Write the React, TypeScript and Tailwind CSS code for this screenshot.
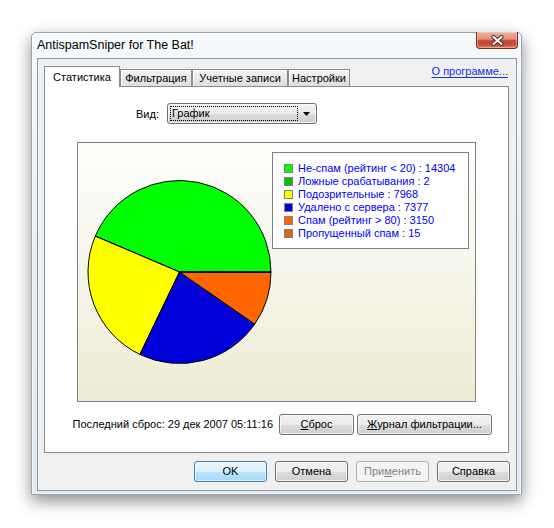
import React from "react";

const cx = 101.5;
const cy = 129;
const r = 91.5;

type Item = { label: string; value: number; fill: string; box: string };

const data: Item[] = [
  { label: "Не-спам (рейтинг < 20) : 14304", value: 14304, fill: "#00ff00", box: "bg-[#00ff00]" },
  { label: "Ложные срабатывания : 2", value: 2, fill: "#00c000", box: "bg-[#00c000]" },
  { label: "Подозрительные : 7968", value: 7968, fill: "#ffff00", box: "bg-[#ffff00]" },
  { label: "Удалено с сервера : 7377", value: 7377, fill: "#0000d8", box: "bg-[#0000d8]" },
  { label: "Спам (рейтинг > 80) : 3150", value: 3150, fill: "#ff6600", box: "bg-[#ff6600]" },
  { label: "Пропущенный спам : 15", value: 15, fill: "#d96a10", box: "bg-[#d96a10]" },
];

function pt(deg: number): [number, number] {
  const a = (deg * Math.PI) / 180;
  return [cx + r * Math.cos(a), cy - r * Math.sin(a)];
}

function Pie() {
  const total = data.reduce((s, d) => s + d.value, 0);
  let acc = 0;
  const paths = data.map((d, i) => {
    const a0 = (acc / total) * 360;
    acc += d.value;
    const a1 = (acc / total) * 360;
    const [x0, y0] = pt(a0);
    const [x1, y1] = pt(a1);
    const large = a1 - a0 > 180 ? 1 : 0;
    const dPath = `M ${cx} ${cy} L ${x0.toFixed(2)} ${y0.toFixed(2)} A ${r} ${r} 0 ${large} 0 ${x1.toFixed(2)} ${y1.toFixed(2)} Z`;
    return <path key={i} d={dPath} fill={d.fill} stroke="#000" strokeWidth={1} strokeLinejoin="round" />;
  });
  return (
    <svg width={194} height={258} viewBox="0 0 194 258" className="block shrink-0">
      {paths}
    </svg>
  );
}

function Btn({
  w,
  kind = "normal",
  children,
}: {
  w: string;
  kind?: "normal" | "default" | "disabled";
  children: React.ReactNode;
}) {
  const look =
    kind === "default"
      ? "border-[#3c7fb1] bg-[linear-gradient(180deg,#eaf6fd_0%,#d9f0fc_50%,#bee6fd_50%,#a7d9f5_100%)] shadow-[inset_0_0_0_1px_rgba(255,255,255,0.55)] text-black"
      : kind === "disabled"
      ? "border-[#adb2b5] bg-[#f4f4f4] text-[#838383]"
      : "border-[#707070] bg-[linear-gradient(180deg,#f2f2f2_0%,#ebebeb_50%,#dddddd_50%,#cfcfcf_100%)] shadow-[inset_0_0_0_1px_rgba(255,255,255,0.7)] text-black";
  return (
    <div className={`${w} h-[21px] shrink-0 flex items-center justify-center rounded-[3px] border ${look} text-[11px] leading-[13px] font-normal`}>
      {children}
    </div>
  );
}

function CloseButton() {
  return (
    <div className="-mt-px mr-[3px] w-[42px] h-[17px] rounded-b-[4px] border border-t-0 border-[#6e2e22] bg-[linear-gradient(180deg,#ebb3a5_0%,#df917f_45%,#c8503a_52%,#c2492f_75%,#d9846a_100%)] shadow-[inset_0_0_0_1px_rgba(255,220,210,0.45)] flex items-center justify-center">
      <svg width={13} height={11} viewBox="0 0 13 11" className="block">
        <path d="M2.5 2 L10.5 9 M10.5 2 L2.5 9" stroke="#3d1f1a" strokeWidth={4} strokeLinecap="round" />
        <path d="M2.5 2 L10.5 9 M10.5 2 L2.5 9" stroke="#ffffff" strokeWidth={2.2} strokeLinecap="round" />
      </svg>
    </div>
  );
}

export default function App() {
  return (
    <div className="w-[554px] h-[528px] bg-white pt-[32px] pl-[31px] overflow-hidden font-['Liberation_Sans',Arial,sans-serif] text-[11px] leading-[13px] text-black">
      {/* window frame */}
      <div className="w-[491px] h-[463px] border border-[#97a3ae] rounded-t-[5px] bg-[linear-gradient(180deg,#f6f9fb_0%,#ebf0f3_35%,#e3e9ee_100%)] shadow-[inset_0_0_0_1px_rgba(255,255,255,0.6),0_6px_16px_rgba(0,0,0,0.45)] flex flex-col">
        {/* title bar */}
        <div className="h-[25px] shrink-0 flex items-start justify-between">
          <div className="pl-[5px] pt-[5px] text-[12.5px] leading-[14px] text-black">AntispamSniper for The Bat!</div>
          <CloseButton />
        </div>

        {/* client area */}
        <div className="ml-[5px] w-[480px] h-[433px] shrink-0 border border-[#8c98a3] bg-[#f0f0f0] pt-[7px] pl-[6px] pr-[6px] flex flex-col">
          {/* tab row */}
          <div className="w-[465px] h-[20px] flex items-end shrink-0">
            <div className="relative z-10 -mb-px w-[76px] h-[21px] border border-b-0 border-[#898c95] bg-white pt-[4px] text-center">
              Статистика
            </div>
            <div className="w-[72px] h-[17px] border border-b-0 border-[#898c95] bg-[linear-gradient(180deg,#f4f4f4_0%,#e9e9e9_50%,#dedede_100%)] shadow-[inset_1px_1px_0_rgba(255,255,255,0.8)] pt-[2px] text-center">
              Фильтрация
            </div>
            <div className="w-[96px] h-[17px] border border-b-0 border-[#898c95] bg-[linear-gradient(180deg,#f4f4f4_0%,#e9e9e9_50%,#dedede_100%)] shadow-[inset_1px_1px_0_rgba(255,255,255,0.8)] pt-[2px] text-center">
              Учетные записи
            </div>
            <div className="w-[62px] h-[17px] border border-b-0 border-[#898c95] bg-[linear-gradient(180deg,#f4f4f4_0%,#e9e9e9_50%,#dedede_100%)] shadow-[inset_1px_1px_0_rgba(255,255,255,0.8)] pt-[2px] text-center">
              Настройки
            </div>
            <div className="ml-auto self-start -mt-px pr-px text-[#1432e6] underline underline-offset-[2px]">
              О программе...
            </div>
          </div>

          {/* tab panel */}
          <div className="w-[465px] h-[367px] shrink-0 border border-[#898c95] bg-white pt-[16px] flex flex-col">
            {/* view selector */}
            <div className="h-[21px] flex items-center pl-[91px] shrink-0">
              <div className="w-[31px] pt-px">Вид:</div>
              <div className="w-[150px] h-[21px] rounded-[3px] border border-[#707070] bg-[linear-gradient(180deg,#f2f2f2_0%,#ebebeb_50%,#dddddd_50%,#cfcfcf_100%)] shadow-[inset_0_0_0_1px_rgba(255,255,255,0.7)] flex items-center">
                <div className="ml-[2px] w-[128px] h-[15px] border border-dotted border-black pl-px flex items-center">
                  График
                </div>
                <svg width={7} height={4} viewBox="0 0 7 4" className="block ml-[5px]">
                  <polygon points="0,0 7,0 3.5,4" fill="#000" />
                </svg>
              </div>
            </div>

            {/* chart */}
            <div className="mt-[18px] ml-[32px] w-[399px] h-[260px] shrink-0 border border-[#808080] bg-[linear-gradient(180deg,#fefefc_0%,#f6f5ea_50%,#eeecd3_100%)] flex items-start">
              <Pie />
              <div className="mt-[9px] w-[197px] h-[97px] border border-[#808080] bg-white pt-[9px] pl-[11px]">
                {data.map((d) => (
                  <div key={d.label} className="h-[13px] flex items-center">
                    <div className={`w-[9px] h-[9px] shrink-0 border border-[#808080] ${d.box}`} />
                    <div className="ml-[5px] text-[#0000ff] whitespace-nowrap">{d.label}</div>
                  </div>
                ))}
              </div>
            </div>

            {/* reset row */}
            <div className="mt-[12px] h-[21px] flex items-center justify-end pr-[16px] shrink-0">
              <div className="whitespace-nowrap">Последний сброс: 29 дек 2007 05:11:16</div>
              <div className="ml-[6px]">
                <Btn w="w-[75px]">
                  <span className="underline underline-offset-[1px]">С</span>брос
                </Btn>
              </div>
              <div className="ml-[3px]">
                <Btn w="w-[135px]">
                  <span className="underline underline-offset-[1px]">Ж</span>урнал фильтрации...
                </Btn>
              </div>
            </div>
          </div>

          {/* dialog buttons */}
          <div className="mt-[8px] flex justify-end gap-[8px] shrink-0">
            <Btn w="w-[73px]" kind="default">OK</Btn>
            <Btn w="w-[73px]">Отмена</Btn>
            <Btn w="w-[73px]" kind="disabled">
              При<span className="underline underline-offset-[1px]">м</span>енить
            </Btn>
            <Btn w="w-[73px]">Справка</Btn>
          </div>
        </div>
      </div>
    </div>
  );
}
